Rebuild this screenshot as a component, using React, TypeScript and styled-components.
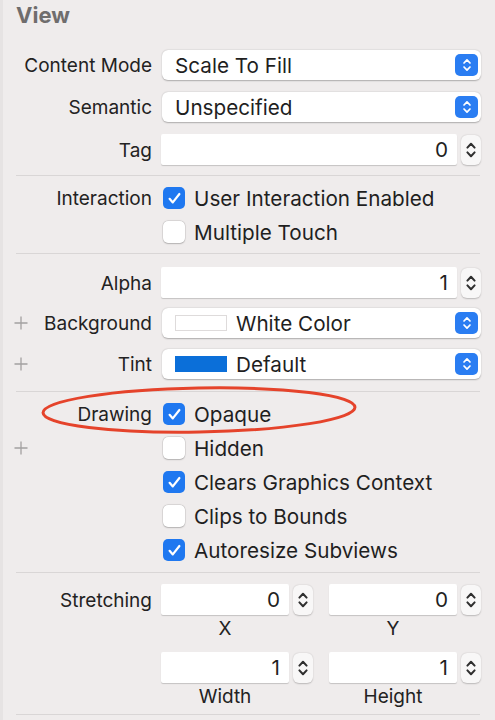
import React from "react";
import styled, { createGlobalStyle } from "styled-components";

const Global = createGlobalStyle`
  html, body { margin: 0; padding: 0; background: #efecec; }
  body { font-family: Inter, "Noto Sans", "Liberation Sans", sans-serif; color: #262626; }
`;

const Panel = styled.div`
  position: relative;
  width: 495px;
  height: 720px;
  box-sizing: border-box;
  background: #efecec;
  border-left: 3px solid #e6e3e3;
  overflow: hidden;
  display: flex;
  flex-direction: column;
`;

const Header = styled.div`
  height: 50px;
  box-sizing: border-box;
  padding: 1px 0 0 13px;
  font-size: 22px;
  font-weight: 700;
  color: #6f6d6d;
  line-height: 28px;
`;

const Section = styled.div<{ $pt: number; $pb: number; $gap: number }>`
  position: relative;
  display: flex;
  flex-direction: column;
  gap: ${(p) => p.$gap}px;
  padding: ${(p) => p.$pt}px 14px ${(p) => p.$pb}px 11px;
`;

const Separator = styled.div`
  height: 1px;
  margin: 0 15px 0 13px;
  background: #d9d6d6;
`;

const Row = styled.div<{ $h: number }>`
  display: grid;
  grid-template-columns: 138px 1fr;
  column-gap: 9px;
  height: ${(p) => p.$h}px;
  align-items: center;
`;

const LabelCell = styled.div<{ $top?: boolean }>`
  display: flex;
  align-items: center;
  justify-content: space-between;
  font-size: 19px;
  color: #232222;
  white-space: nowrap;
  align-self: ${(p) => (p.$top ? "start" : "center")};
  height: ${(p) => (p.$top ? "31px" : "auto")};
`;

const LabelText = styled.span`
  margin-left: auto;
  padding-top: 1px;
`;

const PlusIcon = () => (
  <svg width="14" height="14" viewBox="0 0 14 14">
    <path d="M7 0.5v13M0.5 7h13" stroke="#a3a0a0" strokeWidth="1.3" />
  </svg>
);

const Popup = styled.div`
  height: 30px;
  margin-left: 1px;
  background: #fff;
  border-radius: 6px;
  box-shadow: 0 0.5px 1.5px rgba(0, 0, 0, 0.28);
  display: flex;
  align-items: center;
  padding: 0 3px 0 13px;
  font-size: 20.7px;
  color: #1f1f1f;
`;

const PopupText = styled.span`
  flex: 1;
  padding-top: 1px;
`;

const Swatch = styled.span<{ $color: string }>`
  width: 52px;
  height: 16px;
  box-sizing: border-box;
  margin-right: 9px;
  background: ${(p) => p.$color};
  border: 1px solid ${(p) => (p.$color === "#ffffff" ? "#dedbdb" : p.$color)};
`;

const PopupButton = styled.span`
  width: 23px;
  height: 22px;
  border-radius: 5px;
  background: #2a7df2;
  display: flex;
  align-items: center;
  justify-content: center;
`;

const UpDown = ({ color, w, h }: { color: string; w: number; h: number }) => (
  <svg width={w} height={h} viewBox="0 0 10 16">
    <path d="M2 6l3-3.2 3 3.2M2 10l3 3.2 3-3.2" fill="none" stroke={color} strokeWidth="1.7" strokeLinecap="round" strokeLinejoin="round" />
  </svg>
);

const FieldGroup = styled.div`
  display: flex;
  align-items: center;
  gap: 4px;
  height: 31px;
`;

const Field = styled.div`
  flex: 1;
  height: 31px;
  background: #fff;
  box-shadow: 0 1px 1px rgba(0, 0, 0, 0.18);
  border-radius: 2px;
  display: flex;
  align-items: center;
  justify-content: flex-end;
  padding-right: 9px;
  font-size: 20.7px;
  color: #1f1f1f;
`;

const Stepper = styled.div`
  width: 20px;
  height: 30px;
  border-radius: 6px;
  background: #f8f7f7;
  box-shadow: 0 0.5px 1.5px rgba(0, 0, 0, 0.22);
  display: flex;
  align-items: center;
  justify-content: center;
`;

const CheckLine = styled.label`
  display: flex;
  align-items: center;
  gap: 9px;
  margin-left: 2px;
  font-size: 20.7px;
  color: #1f1f1f;
  white-space: nowrap;
`;

const Box = styled.span<{ $on: boolean }>`
  width: 22px;
  height: 22px;
  box-sizing: border-box;
  border-radius: 5px;
  display: flex;
  align-items: center;
  justify-content: center;
  background: ${(p) => (p.$on ? "#1f78f0" : "#ffffff")};
  box-shadow: ${(p) => (p.$on ? "none" : "0 0 0 0.5px rgba(0,0,0,0.12), 0 0.5px 1.5px rgba(0,0,0,0.2)")};
`;

const Check = () => (
  <svg width="15" height="15" viewBox="0 0 15 15">
    <path d="M2.6 7.8l3.2 3.6 6.6-8.4" fill="none" stroke="#fff" strokeWidth="2.2" strokeLinecap="round" strokeLinejoin="round" />
  </svg>
);

const Pair = styled.div`
  display: grid;
  grid-template-columns: 1fr 1fr;
  column-gap: 16px;
  align-self: start;
`;

const Caption = styled.div`
  text-align: center;
  font-size: 19px;
  color: #232222;
  line-height: 24px;
  padding-right: 24px;
`;

const StretchBlock = styled.div`
  display: flex;
  flex-direction: column;
  gap: 2px;
`;

const Ellipse = styled.svg`
  position: absolute;
  left: 35px;
  top: -10px;
  pointer-events: none;
`;

const Label = ({ text, plus }: { text: string; plus?: boolean }) => (
  <LabelCell>
    {plus ? <PlusIcon /> : null}
    <LabelText>{text}</LabelText>
  </LabelCell>
);

const PopupRow = ({ label, value, plus, swatch }: { label: string; value: string; plus?: boolean; swatch?: string }) => (
  <Row $h={30}>
    <Label text={label} plus={plus} />
    <Popup>
      {swatch ? <Swatch $color={swatch} /> : null}
      <PopupText>{value}</PopupText>
      <PopupButton>
        <UpDown color="#ffffff" w={10} h={16} />
      </PopupButton>
    </Popup>
  </Row>
);

const StepField = ({ value }: { value: string }) => (
  <FieldGroup>
    <Field>{value}</Field>
    <Stepper>
      <UpDown color="#2f2f2f" w={12} h={22} />
    </Stepper>
  </FieldGroup>
);

const CheckRow = ({ label, text, on, plus }: { label?: string; text: string; on: boolean; plus?: boolean }) => (
  <Row $h={34}>
    <Label text={label ?? ""} plus={plus} />
    <CheckLine>
      <Box $on={on}>{on ? <Check /> : null}</Box>
      {text}
    </CheckLine>
  </Row>
);

const StretchRow = ({ label, a, b }: { label: string; a: [string, string]; b: [string, string] }) => (
  <Row $h={56}>
    <LabelCell $top>
      <LabelText>{label}</LabelText>
    </LabelCell>
    <Pair>
      <StretchBlock>
        <StepField value={a[0]} />
        <Caption>{a[1]}</Caption>
      </StretchBlock>
      <StretchBlock>
        <StepField value={b[0]} />
        <Caption>{b[1]}</Caption>
      </StretchBlock>
    </Pair>
  </Row>
);

export default function App() {
  return (
    <>
      <Global />
      <Panel>
        <Header>View</Header>
        <Section $pt={0} $pb={11} $gap={12}>
          <PopupRow label="Content Mode" value="Scale To Fill" />
          <PopupRow label="Semantic" value="Unspecified" />
          <Row $h={30}>
            <Label text="Tag" />
            <StepField value="0" />
          </Row>
        </Section>
        <Separator />
        <Section $pt={5} $pb={4} $gap={0}>
          <CheckRow label="Interaction" text="User Interaction Enabled" on />
          <CheckRow text="Multiple Touch" on={false} />
        </Section>
        <Separator />
        <Section $pt={13} $pb={12} $gap={11}>
          <Row $h={30}>
            <Label text="Alpha" />
            <StepField value="1" />
          </Row>
          <PopupRow label="Background" value="White Color" plus swatch="#ffffff" />
          <PopupRow label="Tint" value="Default" plus swatch="#0b6fd9" />
        </Section>
        <Separator />
        <Section $pt={5} $pb={5} $gap={0}>
          <CheckRow label="Drawing" text="Opaque" on />
          <CheckRow text="Hidden" on={false} plus />
          <CheckRow text="Clears Graphics Context" on />
          <CheckRow text="Clips to Bounds" on={false} />
          <CheckRow text="Autoresize Subviews" on />
          <Ellipse width="324" height="56" viewBox="0 0 324 56">
            <ellipse cx="161" cy="28" rx="156" ry="22" fill="none" stroke="#e5432b" strokeWidth="3" transform="rotate(-1 161 28)" />
          </Ellipse>
        </Section>
        <Separator />
        <Section $pt={11} $pb={6} $gap={12}>
          <StretchRow label="Stretching" a={["0", "X"]} b={["0", "Y"]} />
          <StretchRow label="" a={["1", "Width"]} b={["1", "Height"]} />
        </Section>
        <Separator />
      </Panel>
    </>
  );
}
